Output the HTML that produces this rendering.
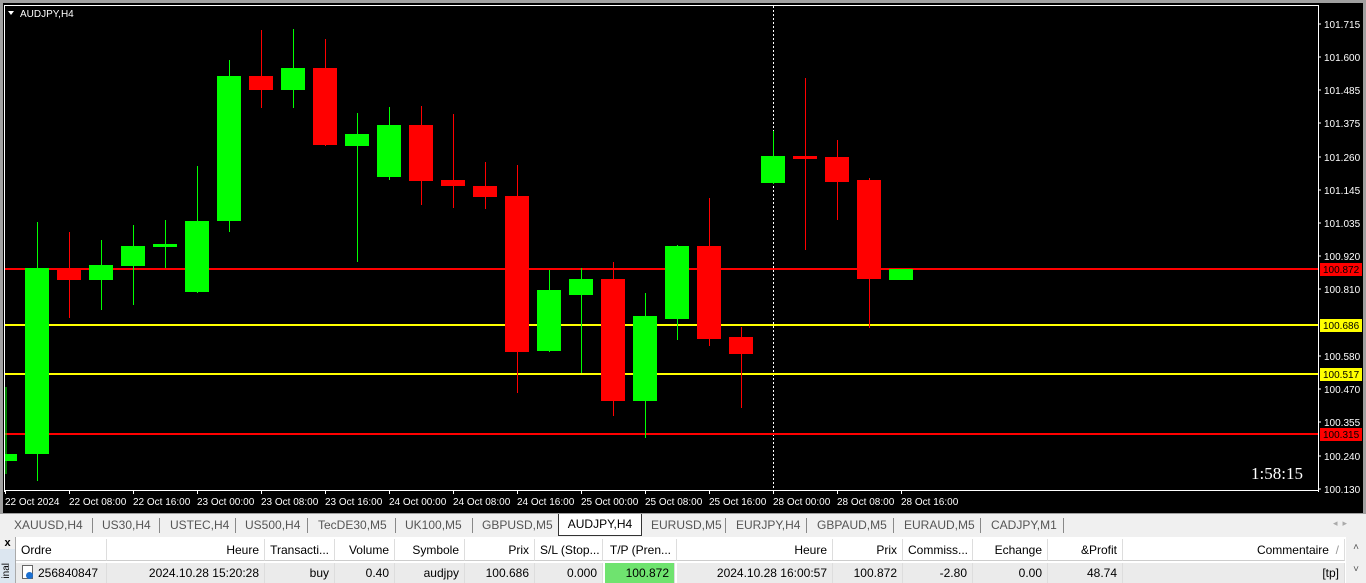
<!DOCTYPE html>
<html><head><meta charset="utf-8"><style>
body{margin:0;width:1366px;height:583px;overflow:hidden;background:#f0f0f0;font-family:"Liberation Sans",sans-serif;position:relative}
.tabs{position:absolute;left:0;top:513px;width:1366px;height:23px;background:#f0f0f0;border-top:1px solid #a0a0a0;font-size:12px;color:#555}
.tab{position:absolute;top:4px;white-space:nowrap}
.sep{position:absolute;top:4px;width:1px;height:15px;background:#888}
.act{position:absolute;left:558px;top:0;width:82px;height:21px;background:#fff;border:1px solid #333;border-top:none;color:#000;text-align:center;line-height:20px}
.tbl{position:absolute;left:0;top:537px;width:1366px;height:46px;background:#fff;font-size:12px}
.c{position:absolute;height:22px;line-height:22px;white-space:nowrap;box-sizing:border-box;padding:0 5px;border-right:1px solid #ddd}
.h{top:2px;background:#fff;border-bottom:1px solid #ccc}
.r{top:26px;background:#ebebeb;height:20px;line-height:20px}
.rt{text-align:right}
</style></head><body>
<svg width="1366" height="513" style="position:absolute;left:0;top:0" font-family="Liberation Sans, sans-serif">
<rect width="1366" height="513" fill="#000"/>
<rect x="0" y="0" width="1366" height="3" fill="#a0a0a0"/>
<rect x="0" y="0" width="3" height="513" fill="#a0a0a0"/>
<rect x="1363" y="0" width="3" height="513" fill="#a0a0a0"/>
<polyline points="4.5,492 4.5,5.5 1318.5,5.5 1318.5,492" fill="none" stroke="#fff"/>
<line x1="4" y1="490.5" x2="1318" y2="490.5" stroke="#fff"/>
<path d="M8 11 L14 11 L11 15 Z" fill="#fff"/>
<text x="20" y="17" font-size="10" fill="#fff">AUDJPY,H4</text>
<line x1="773.5" y1="6" x2="773.5" y2="490" stroke="#fff" stroke-dasharray="2,2"/>
<g fill="#fff" font-size="10">
<text x="1324" y="28">101.715</text><text x="1324" y="61">101.600</text><text x="1324" y="94">101.485</text><text x="1324" y="127">101.375</text><text x="1324" y="161">101.260</text><text x="1324" y="194">101.145</text><text x="1324" y="227">101.035</text><text x="1324" y="260">100.920</text><text x="1324" y="293">100.810</text><text x="1324" y="360">100.580</text><text x="1324" y="393">100.470</text><text x="1324" y="426">100.355</text><text x="1324" y="460">100.240</text><text x="1324" y="493">100.130</text>
</g>
<g stroke="#fff"><path d="M1318 24h3M1318 57h3M1318 90h3M1318 123h3M1318 157h3M1318 190h3M1318 223h3M1318 256h3M1318 289h3M1318 356h3M1318 389h3M1318 422h3M1318 456h3M1318 489h3"/></g>
<g stroke-width="2">
<line x1="5" y1="269" x2="1318" y2="269" stroke="#f00"/>
<line x1="5" y1="325" x2="1318" y2="325" stroke="#ff0"/>
<line x1="5" y1="374" x2="1318" y2="374" stroke="#ff0"/>
<line x1="5" y1="434" x2="1318" y2="434" stroke="#f00"/>
</g>
<rect x="1320" y="263" width="42" height="13" fill="#f00"/><text x="1323" y="273" font-size="10" fill="#000">100.872</text>
<rect x="1320" y="319" width="42" height="13" fill="#ff0"/><text x="1323" y="329" font-size="10" fill="#000">100.686</text>
<rect x="1320" y="368" width="42" height="13" fill="#ff0"/><text x="1323" y="378" font-size="10" fill="#000">100.517</text>
<rect x="1320" y="428" width="42" height="13" fill="#f00"/><text x="1323" y="438" font-size="10" fill="#000">100.315</text>
<g id="c">
<g fill="#0f0" stroke="#0f0">
<line x1="6" y1="387" x2="6" y2="474"/><rect x="5" y="454" width="12" height="7" stroke="none"/>
<line x1="37.5" y1="222" x2="37.5" y2="481"/><rect x="25" y="268" width="24" height="186" stroke="none"/>
<line x1="101.5" y1="240" x2="101.5" y2="310"/><rect x="89" y="265" width="24" height="15" stroke="none"/>
<line x1="133.5" y1="225" x2="133.5" y2="305"/><rect x="121" y="246" width="24" height="20" stroke="none"/>
<line x1="165.5" y1="220" x2="165.5" y2="268"/><rect x="153" y="244" width="24" height="3" stroke="none"/>
<line x1="197.5" y1="166" x2="197.5" y2="293"/><rect x="185" y="221" width="24" height="71" stroke="none"/>
<line x1="229.5" y1="60" x2="229.5" y2="232"/><rect x="217" y="76" width="24" height="145" stroke="none"/>
<line x1="293.5" y1="29" x2="293.5" y2="108"/><rect x="281" y="68" width="24" height="22" stroke="none"/>
<line x1="357.5" y1="113" x2="357.5" y2="262"/><rect x="345" y="134" width="24" height="12" stroke="none"/>
<line x1="389.5" y1="107" x2="389.5" y2="180"/><rect x="377" y="125" width="24" height="52" stroke="none"/>
<line x1="549.5" y1="270" x2="549.5" y2="352"/><rect x="537" y="290" width="24" height="61" stroke="none"/>
<line x1="581.5" y1="268" x2="581.5" y2="373"/><rect x="569" y="279" width="24" height="16" stroke="none"/>
<line x1="645.5" y1="293" x2="645.5" y2="438"/><rect x="633" y="316" width="24" height="85" stroke="none"/>
<line x1="677.5" y1="245" x2="677.5" y2="340"/><rect x="665" y="246" width="24" height="73" stroke="none"/>
<line x1="773.5" y1="131" x2="773.5" y2="184"/><rect x="761" y="156" width="24" height="27" stroke="none"/>
<rect x="889" y="269" width="24" height="11" stroke="none"/>
</g>
<g fill="#f00" stroke="#f00">
<line x1="69.5" y1="232" x2="69.5" y2="318"/><rect x="57" y="268" width="24" height="12" stroke="none"/>
<line x1="261.5" y1="30" x2="261.5" y2="108"/><rect x="249" y="76" width="24" height="14" stroke="none"/>
<line x1="325.5" y1="39" x2="325.5" y2="146"/><rect x="313" y="68" width="24" height="77" stroke="none"/>
<line x1="421.5" y1="106" x2="421.5" y2="205"/><rect x="409" y="125" width="24" height="56" stroke="none"/>
<line x1="453.5" y1="114" x2="453.5" y2="208"/><rect x="441" y="180" width="24" height="6" stroke="none"/>
<line x1="485.5" y1="162" x2="485.5" y2="209"/><rect x="473" y="186" width="24" height="11" stroke="none"/>
<line x1="517.5" y1="165" x2="517.5" y2="393"/><rect x="505" y="196" width="24" height="156" stroke="none"/>
<line x1="613.5" y1="262" x2="613.5" y2="416"/><rect x="601" y="279" width="24" height="122" stroke="none"/>
<line x1="709.5" y1="198" x2="709.5" y2="346"/><rect x="697" y="246" width="24" height="93" stroke="none"/>
<line x1="741.5" y1="327" x2="741.5" y2="408"/><rect x="729" y="337" width="24" height="17" stroke="none"/>
<line x1="805.5" y1="78" x2="805.5" y2="250"/><rect x="793" y="156" width="24" height="3" stroke="none"/>
<line x1="837.5" y1="140" x2="837.5" y2="220"/><rect x="825" y="157" width="24" height="25" stroke="none"/>
<line x1="869.5" y1="178" x2="869.5" y2="328"/><rect x="857" y="180" width="24" height="99" stroke="none"/>
</g>
</g>
<text x="1251" y="479" font-size="17" fill="#fff" font-family="Liberation Serif, serif">1:58:15</text>
<g fill="#fff" font-size="10">
<text x="5" y="505">22 Oct 2024</text><text x="69" y="505">22 Oct 08:00</text><text x="133" y="505">22 Oct 16:00</text><text x="197" y="505">23 Oct 00:00</text><text x="261" y="505">23 Oct 08:00</text><text x="325" y="505">23 Oct 16:00</text><text x="389" y="505">24 Oct 00:00</text><text x="453" y="505">24 Oct 08:00</text><text x="517" y="505">24 Oct 16:00</text><text x="581" y="505">25 Oct 00:00</text><text x="645" y="505">25 Oct 08:00</text><text x="709" y="505">25 Oct 16:00</text><text x="773" y="505">28 Oct 00:00</text><text x="837" y="505">28 Oct 08:00</text><text x="901" y="505">28 Oct 16:00</text>
</g>
<g stroke="#fff"><path d="M5.5 490v4M69.5 490v4M133.5 490v4M197.5 490v4M261.5 490v4M325.5 490v4M389.5 490v4M453.5 490v4M517.5 490v4M581.5 490v4M645.5 490v4M709.5 490v4M773.5 490v4M837.5 490v4M901.5 490v4"/></g>
</svg>
<div class="tabs">
<span class="tab" style="left:14px">XAUUSD,H4</span><div class="sep" style="left:92px"></div>
<span class="tab" style="left:102px">US30,H4</span><div class="sep" style="left:159px"></div>
<span class="tab" style="left:170px">USTEC,H4</span><div class="sep" style="left:235px"></div>
<span class="tab" style="left:245px">US500,H4</span><div class="sep" style="left:307px"></div>
<span class="tab" style="left:318px">TecDE30,M5</span><div class="sep" style="left:395px"></div>
<span class="tab" style="left:405px">UK100,M5</span><div class="sep" style="left:472px"></div>
<span class="tab" style="left:482px">GBPUSD,M5</span>
<div class="act">AUDJPY,H4</div>
<span class="tab" style="left:651px">EURUSD,M5</span><div class="sep" style="left:725px"></div>
<span class="tab" style="left:736px">EURJPY,H4</span><div class="sep" style="left:806px"></div>
<span class="tab" style="left:817px">GBPAUD,M5</span><div class="sep" style="left:893px"></div>
<span class="tab" style="left:904px">EURAUD,M5</span><div class="sep" style="left:980px"></div>
<span class="tab" style="left:991px">CADJPY,M1</span><div class="sep" style="left:1063px"></div>
<span class="tab" style="left:1333px;color:#aaa;font-size:9px">◂ &nbsp;▸</span>
</div>
<div class="tbl">
<div style="position:absolute;left:0;top:0;width:15px;height:46px;background:#dce6f0;border-right:1px solid #aaa"><div style="font-size:11px;font-weight:bold;text-align:center;background:#f0f0f0">x</div><div style="position:absolute;left:1px;top:26px;font-size:10px;writing-mode:vertical-rl;transform:rotate(180deg)">inal</div></div>
<div class="c h" style="left:16px;width:91px">Ordre</div>
<div class="c h rt" style="left:107px;width:158px">Heure</div>
<div class="c h rt" style="left:265px;width:70px">Transacti...</div>
<div class="c h rt" style="left:335px;width:60px">Volume</div>
<div class="c h rt" style="left:395px;width:70px">Symbole</div>
<div class="c h rt" style="left:465px;width:70px">Prix</div>
<div class="c h rt" style="left:535px;width:68px">S/L (Stop...</div>
<div class="c h rt" style="left:603px;width:74px">T/P (Pren...</div>
<div class="c h rt" style="left:677px;width:156px">Heure</div>
<div class="c h rt" style="left:833px;width:70px">Prix</div>
<div class="c h rt" style="left:903px;width:70px">Commiss...</div>
<div class="c h rt" style="left:973px;width:75px">Echange</div>
<div class="c h rt" style="left:1048px;width:75px">&amp;Profit</div>
<div class="c h rt" style="left:1123px;width:222px">Commentaire &nbsp;<span style="color:#999">/</span></div>
<div class="c r" style="left:16px;width:91px;padding-left:6px"><span style="display:inline-block;width:9px;height:12px;border:1px solid #666;background:#fff;vertical-align:-2px;margin-right:5px;position:relative"><span style="position:absolute;left:3px;top:6px;width:7px;height:7px;border-radius:50%;background:#1a6fd0"></span></span>256840847</div>
<div class="c r rt" style="left:107px;width:158px">2024.10.28 15:20:28</div>
<div class="c r rt" style="left:265px;width:70px">buy</div>
<div class="c r rt" style="left:335px;width:60px">0.40</div>
<div class="c r rt" style="left:395px;width:70px">audjpy</div>
<div class="c r rt" style="left:465px;width:70px">100.686</div>
<div class="c r rt" style="left:535px;width:68px">0.000</div>
<div class="c r rt" style="left:605px;width:70px;background:#6fe36f">100.872</div>
<div class="c r rt" style="left:677px;width:156px">2024.10.28 16:00:57</div>
<div class="c r rt" style="left:833px;width:70px">100.872</div>
<div class="c r rt" style="left:903px;width:70px">-2.80</div>
<div class="c r rt" style="left:973px;width:75px">0.00</div>
<div class="c r rt" style="left:1048px;width:75px">48.74</div>
<div class="c r rt" style="left:1123px;width:222px">[tp]</div>
<div style="position:absolute;left:1346px;top:0;width:20px;height:46px;background:#f0f0f0;font-size:10px;color:#555;text-align:center;line-height:22px">˄<br>˅</div>
</div>
</body></html>
